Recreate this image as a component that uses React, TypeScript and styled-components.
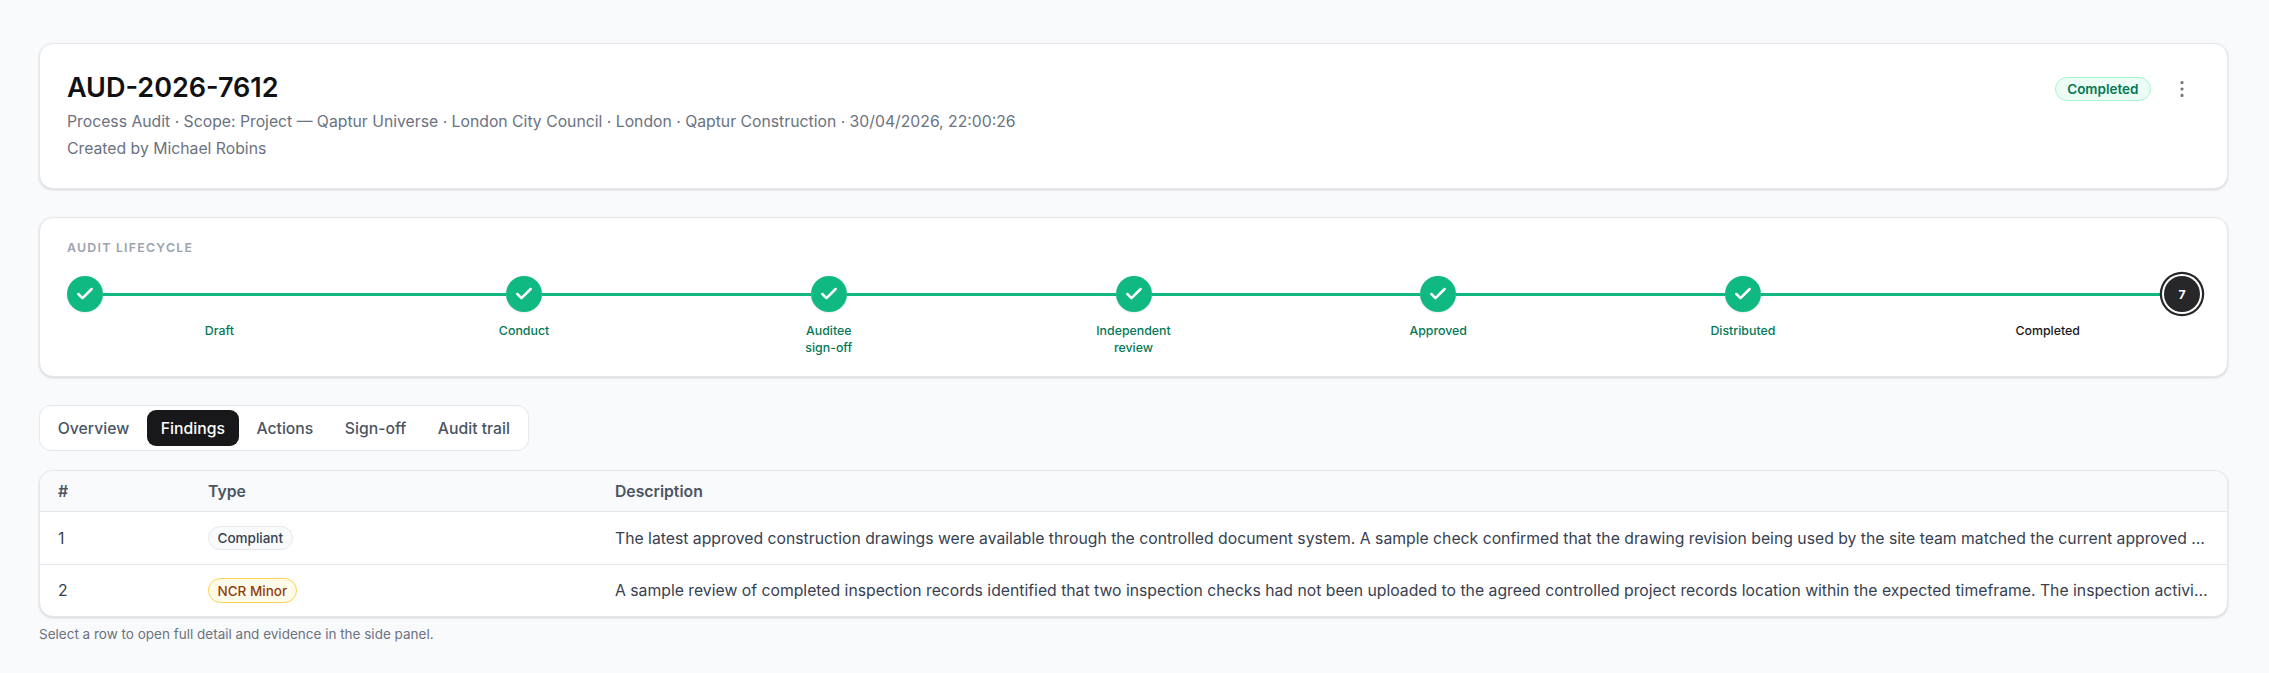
import React from 'react';
import styled, { createGlobalStyle } from 'styled-components';
import { Check, MoreVertical } from 'lucide-react';

const GlobalStyle = createGlobalStyle`
  html, body {
    margin: 0;
    padding: 0;
    background: #f9fafb;
    font-family: Inter, "Liberation Sans", sans-serif;
    color: #111827;
  }
  * {
    box-sizing: border-box;
  }
`;

const Page = styled.div`
  padding: 43px 41px 28px 39px;
  display: flex;
  flex-direction: column;
`;

const Card = styled.section`
  background: #fff;
  border: 1px solid #e5e7eb;
  border-radius: 14px;
  box-shadow: 0 1px 3px rgba(0, 0, 0, 0.1), 0 1px 2px rgba(0, 0, 0, 0.06);
`;

const HeaderCard = styled(Card)`
  padding: 28px 27px;
  display: flex;
  justify-content: space-between;
  align-items: flex-start;
`;

const Title = styled.h1`
  margin: 0 0 7px;
  font-size: 27px;
  line-height: 32px;
  font-weight: 600;
  color: #111113;
`;

const Meta = styled.p`
  margin: 0 0 5px;
  font-size: 15.75px;
  line-height: 22px;
  color: #6b7280;

  &:last-child {
    margin-bottom: 0;
  }
`;

const HeaderActions = styled.div`
  display: flex;
  align-items: center;
  gap: 20px;
  margin-top: 5px;
  margin-right: 7px;
`;

const StatusPill = styled.span`
  height: 24px;
  padding: 0 11.5px;
  display: inline-flex;
  align-items: center;
  border: 1px solid #a7f3d0;
  border-radius: 999px;
  background: #ecfdf5;
  color: #047857;
  font-size: 13.5px;
  font-weight: 600;
`;

const KebabButton = styled.button`
  width: 22px;
  height: 24px;
  padding: 0;
  border: none;
  background: none;
  color: #6b7280;
  display: flex;
  align-items: center;
  justify-content: center;
`;

const LifecycleCard = styled(Card)`
  margin-top: 28px;
  padding: 22px 27px 20px;
`;

const SectionLabel = styled.div`
  font-size: 12.375px;
  line-height: 16px;
  font-weight: 600;
  letter-spacing: 0.1em;
  text-transform: uppercase;
  color: #9ca3af;
`;

const Steps = styled.div`
  margin-top: 20px;
  display: grid;
  grid-template-columns: repeat(7, minmax(0, 1fr));
`;

const Step = styled.div`
  display: flex;
  flex-direction: column;
  align-items: stretch;
`;

const StepTrack = styled.div`
  display: flex;
  align-items: center;
  height: 36px;
`;

const Connector = styled.span`
  flex: 1;
  height: 3px;
  background: #10b981;
`;

const StepCircle = styled.span<{ $current?: boolean }>`
  position: relative;
  z-index: 1;
  flex: none;
  width: 36px;
  height: 36px;
  border-radius: 50%;
  display: flex;
  align-items: center;
  justify-content: center;
  color: #fff;
  font-size: 12.375px;
  font-weight: 700;
  background: ${p => (p.$current ? '#27272a' : '#10b981')};
  box-shadow: ${p =>
    p.$current ? '0 0 0 2px #fff, 0 0 0 4.25px #27272a' : '0 1px 2px rgba(0, 0, 0, 0.08)'};
`;

const StepLabel = styled.div<{ $current?: boolean }>`
  margin: 10px auto 0;
  max-width: 78px;
  text-align: center;
  font-size: 12.375px;
  line-height: 17px;
  font-weight: 500;
  color: ${p => (p.$current ? '#18181b' : '#047857')};
`;

const Tabs = styled.div`
  margin-top: 28px;
  align-self: flex-start;
  display: flex;
  gap: 4px;
  padding: 4px;
  background: #fff;
  border: 1px solid #e5e7eb;
  border-radius: 12px;
`;

const Tab = styled.button<{ $active?: boolean }>`
  height: 36px;
  padding: 0 13.75px;
  border: none;
  border-radius: 9px;
  font-family: inherit;
  font-size: 15.75px;
  font-weight: 500;
  background: ${p => (p.$active ? '#18181b' : 'transparent')};
  color: ${p => (p.$active ? '#fff' : '#4b5563')};
`;

const TableCard = styled(Card)`
  margin-top: 19px;
  overflow: hidden;
`;

const Table = styled.table`
  width: 100%;
  border-collapse: separate;
  border-spacing: 0;
  table-layout: fixed;
`;

const HeadCell = styled.th<{ $width?: number }>`
  width: ${p => (p.$width ? `${p.$width}px` : 'auto')};
  height: 41px;
  padding: 0 18px;
  background: #f9fafb;
  border-bottom: 1px solid #e5e7eb;
  text-align: left;
  font-size: 15.75px;
  font-weight: 600;
  color: #4b5563;
`;

const Cell = styled.td`
  height: 53px;
  padding: 0 18px;
  border-bottom: 1px solid #e5e7eb;
  font-size: 15.75px;
  color: #374151;
  white-space: nowrap;
  overflow: hidden;
  text-overflow: ellipsis;
`;

const BodyRow = styled.tr`
  &:last-child ${Cell} {
    height: 51px;
    border-bottom: none;
  }
`;

const TypeBadge = styled.span<{ $tone: 'neutral' | 'warning' }>`
  display: inline-flex;
  align-items: center;
  height: 24.5px;
  padding: 0 8.5px;
  border-radius: 999px;
  font-size: 13.5px;
  font-weight: 500;
  border: 1px solid ${p => (p.$tone === 'warning' ? '#fcd34d' : '#e5e7eb')};
  background: ${p => (p.$tone === 'warning' ? '#fffbeb' : '#f9fafb')};
  color: ${p => (p.$tone === 'warning' ? '#92400e' : '#374151')};
`;

const Footnote = styled.p`
  margin: 8px 0 0;
  font-size: 13.5px;
  line-height: 18px;
  color: #6b7280;
`;

const steps = [
  'Draft',
  'Conduct',
  'Auditee sign-off',
  'Independent review',
  'Approved',
  'Distributed',
  'Completed',
];

const tabs = ['Overview', 'Findings', 'Actions', 'Sign-off', 'Audit trail'];

const findings = [
  {
    id: 1,
    type: 'Compliant',
    tone: 'neutral' as const,
    text: 'The latest approved construction drawings were available through the controlled document system. A sample check confirmed that the drawing revision being used by the site team matched the current approved revision issued for construction and that superseded copies had been withdrawn.',
  },
  {
    id: 2,
    type: 'NCR Minor',
    tone: 'warning' as const,
    text: 'A sample review of completed inspection records identified that two inspection checks had not been uploaded to the agreed controlled project records location within the expected timeframe. The inspection activities themselves had been completed on site and the records were available locally.',
  },
];

const App: React.FC = () => {
  return (
    <>
      <GlobalStyle />
      <Page>
        <HeaderCard>
          <div>
            <Title>AUD-2026-7612</Title>
            <Meta>
              Process Audit · Scope: Project — Qaptur Universe · London City Council · London · Qaptur Construction · 30/04/2026, 22:00:26
            </Meta>
            <Meta>Created by Michael Robins</Meta>
          </div>
          <HeaderActions>
            <StatusPill>Completed</StatusPill>
            <KebabButton aria-label="More actions">
              <MoreVertical size={22} strokeWidth={1.5} />
            </KebabButton>
          </HeaderActions>
        </HeaderCard>

        <LifecycleCard>
          <SectionLabel>Audit lifecycle</SectionLabel>
          <Steps>
            {steps.map((label, i) => {
              const last = i === steps.length - 1;
              return (
                <Step key={label}>
                  <StepTrack>
                    {i > 0 && <Connector />}
                    <StepCircle $current={last}>
                      {last ? i + 1 : <Check size={20} strokeWidth={3} />}
                    </StepCircle>
                    {!last && <Connector />}
                  </StepTrack>
                  <StepLabel $current={last}>{label}</StepLabel>
                </Step>
              );
            })}
          </Steps>
        </LifecycleCard>

        <Tabs>
          {tabs.map(t => (
            <Tab key={t} $active={t === 'Findings'}>
              {t}
            </Tab>
          ))}
        </Tabs>

        <TableCard>
          <Table>
            <thead>
              <tr>
                <HeadCell $width={150}>#</HeadCell>
                <HeadCell $width={407}>Type</HeadCell>
                <HeadCell>Description</HeadCell>
              </tr>
            </thead>
            <tbody>
              {findings.map(f => (
                <BodyRow key={f.id}>
                  <Cell>{f.id}</Cell>
                  <Cell>
                    <TypeBadge $tone={f.tone}>{f.type}</TypeBadge>
                  </Cell>
                  <Cell>{f.text}</Cell>
                </BodyRow>
              ))}
            </tbody>
          </Table>
        </TableCard>
        <Footnote>Select a row to open full detail and evidence in the side panel.</Footnote>
      </Page>
    </>
  );
};

export default App;
